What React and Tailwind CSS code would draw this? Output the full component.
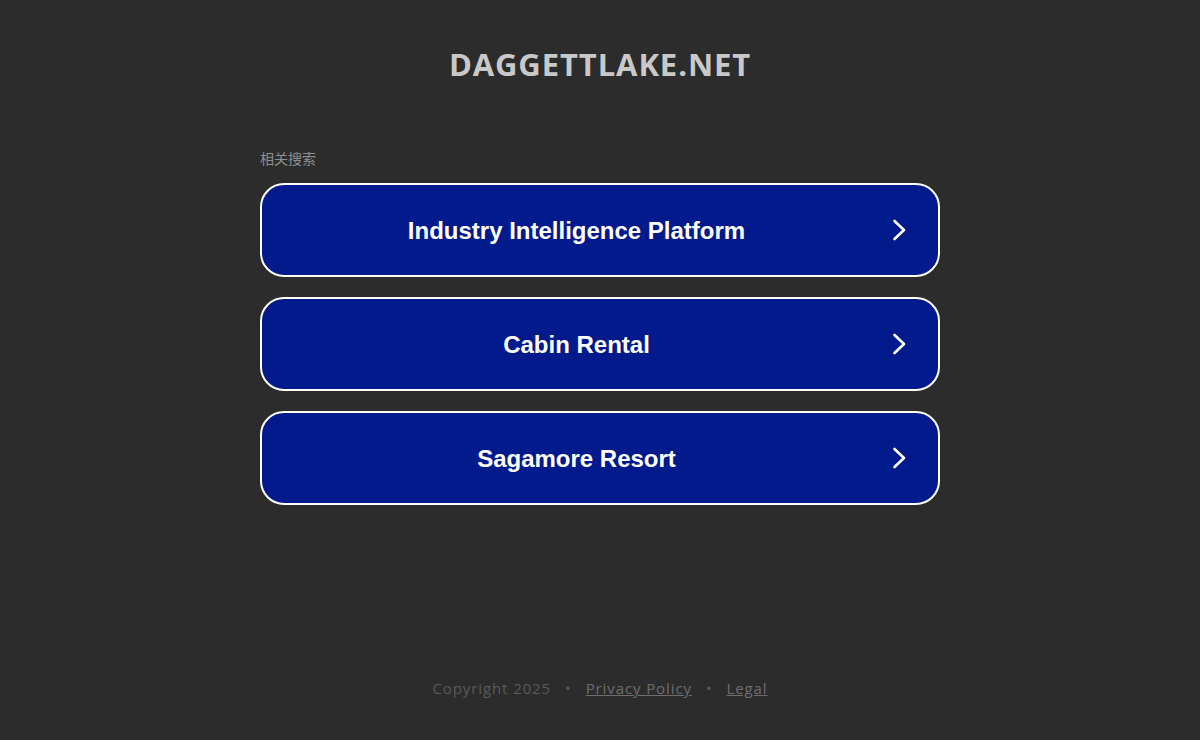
import React from "react";

const items = ["Industry Intelligence Platform", "Cabin Rental", "Sagamore Resort"];

function Chevron() {
  return (
    <svg width="16" height="24" viewBox="0 0 16 24" className="shrink-0">
      <polyline points="3.5,3 13,12 3.5,21" fill="none" stroke="#ffffff" strokeWidth="2.6" strokeLinecap="round" strokeLinejoin="round" />
    </svg>
  );
}

export default function App() {
  return (
    <div className="min-h-[740px] w-full bg-[#2c2c2c] flex flex-col items-center" style={{ fontFamily: '"Open Sans", sans-serif' }}>
      <h1 className="mt-[44px] text-[31px] leading-[40px] font-bold text-[#c9c9c9] tracking-[0.9px]" style={{ fontFamily: '"Open Sans", sans-serif' }}>
        DAGGETTLAKE.NET
      </h1>
      <div className="w-[680px] mt-[65px]">
        <div className="text-[14px] leading-[18px] text-[#8f8f8f] mb-[16px]" style={{ fontFamily: '"Noto Sans CJK SC", sans-serif' }}>
          相关搜索
        </div>
        <div className="flex flex-col gap-[20px]">
          {items.map((t) => (
            <div key={t} className="h-[94px] rounded-[24px] border-2 border-white bg-[#021a8b] flex items-center">
              <span className="flex-1 pt-[2px] text-center text-white font-bold text-[24px]" style={{ fontFamily: '"Liberation Sans", Arial, sans-serif' }}>
                {t}
              </span>
              <span className="mr-[31px] flex items-center"><Chevron /></span>
            </div>
          ))}
        </div>
      </div>
      <div className="mt-[172px] flex items-center text-[15px] tracking-[0.9px] text-[#5a5a5a]" style={{ fontFamily: '"Open Sans", sans-serif' }}>
        <span>Copyright 2025</span>
        <span className="mx-[14px]">•</span>
        <span className="underline text-[#6e6e6e]">Privacy Policy</span>
        <span className="mx-[14px]">•</span>
        <span className="underline text-[#6e6e6e]">Legal</span>
      </div>
    </div>
  );
}
